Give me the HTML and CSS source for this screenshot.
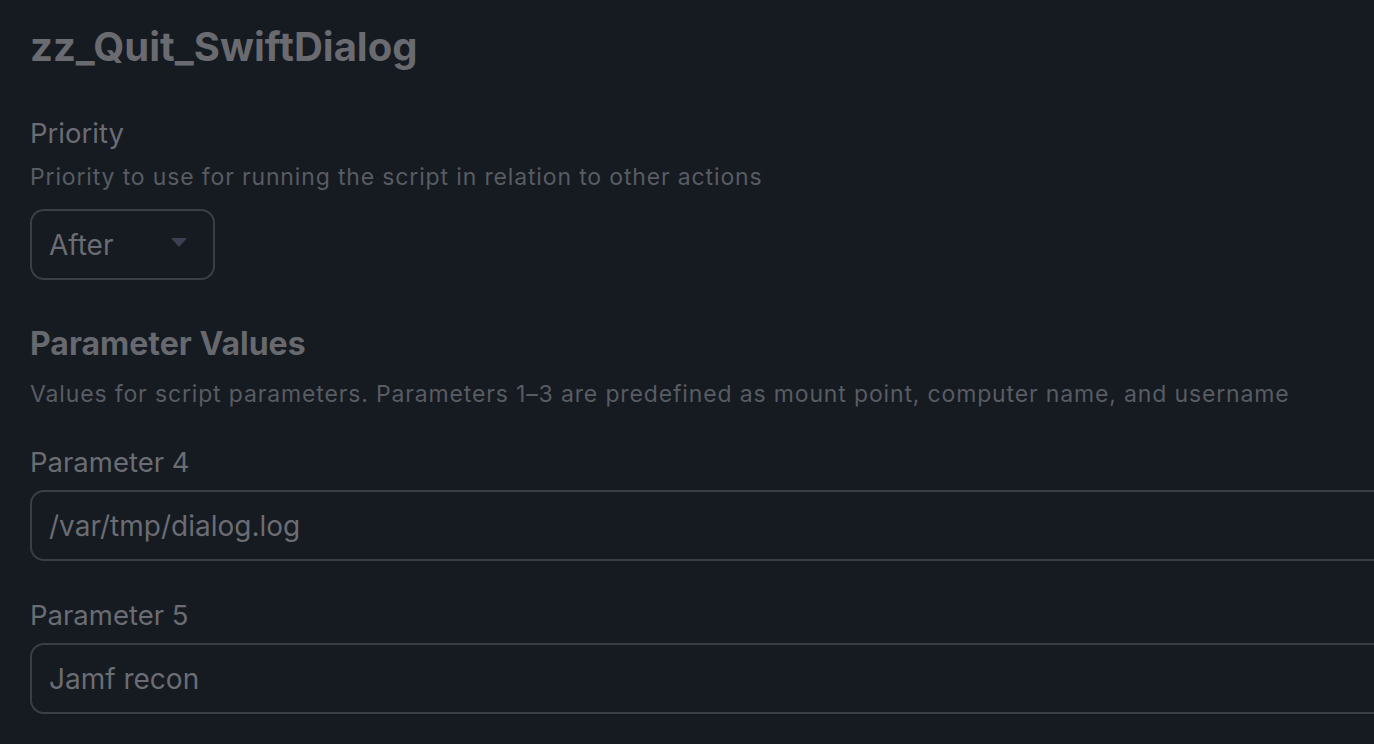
FILE: index.html
```html
<!DOCTYPE html>
<html>
<head>
<meta charset="utf-8">
<link rel="stylesheet" href="styles.css">
</head>
<body>
<main class="page">
  <h1 class="title">zz_Quit_SwiftDialog</h1>

  <section class="field field-priority">
    <div class="label">Priority</div>
    <div class="desc">Priority to use for running the script in relation to other actions</div>
    <div class="select">
      <span class="select-value">After</span>
      <span class="caret"></span>
    </div>
  </section>

  <section class="group">
    <h2 class="group-title">Parameter Values</h2>
    <div class="desc">Values for script parameters. Parameters 1–3 are predefined as mount point, computer name, and username</div>
  </section>

  <section class="field field-param">
    <div class="label">Parameter 4</div>
    <div class="input">/var/tmp/dialog.log</div>
  </section>

  <section class="field field-param">
    <div class="label">Parameter 5</div>
    <div class="input">Jamf recon</div>
  </section>
</main>
</body>
</html>
```

FILE: styles.css
```css
html, body {
  margin: 0;
  padding: 0;
  background: #161a21;
  overflow: hidden;
  height: 100%;
}

.page {
  font-family: "Inter", "Liberation Sans", sans-serif;
  padding: 22px 0 0 30px;
  color: #6a6d73;
}

.title {
  margin: 0;
  font-size: 40px;
  font-weight: 700;
  line-height: 50px;
  color: #696b70;
}

.field-priority {
  margin-top: 45px;
}

.label {
  font-size: 27.5px;
  line-height: 32px;
  color: #6a6d73;
}

.desc {
  font-size: 23px;
  line-height: 30px;
  letter-spacing: 0.85px;
  color: #585c63;
  margin-top: 13px;
}

.select {
  margin-top: 17px;
  width: 185px;
  height: 71px;
  box-sizing: border-box;
  border: 2px solid #3a3e46;
  border-radius: 14px;
  display: flex;
  align-items: center;
  justify-content: space-between;
  padding: 0 26px 0 17px;
}

.select-value {
  font-size: 28px;
  color: #6a6d73;
}

.caret {
  width: 0;
  height: 0;
  border-left: 8px solid transparent;
  border-right: 8px solid transparent;
  border-top: 9px solid #3b4150;
  margin-top: -4px;
}

.group {
  margin-top: 45px;
}

.group-title {
  margin: 0;
  font-size: 32px;
  font-weight: 700;
  line-height: 38px;
  color: #67696e;
}

.group .desc {
  margin-top: 16px;
}

.field-param {
  margin-top: 37px;
}

.field-param + .field-param {
  margin-top: 38px;
}

.input {
  margin-top: 12px;
  width: 1400px;
  height: 71px;
  box-sizing: border-box;
  border: 2px solid #3a3e46;
  border-radius: 14px;
  display: flex;
  align-items: center;
  padding-left: 17px;
  font-size: 28px;
  color: #6a6d73;
}
```
